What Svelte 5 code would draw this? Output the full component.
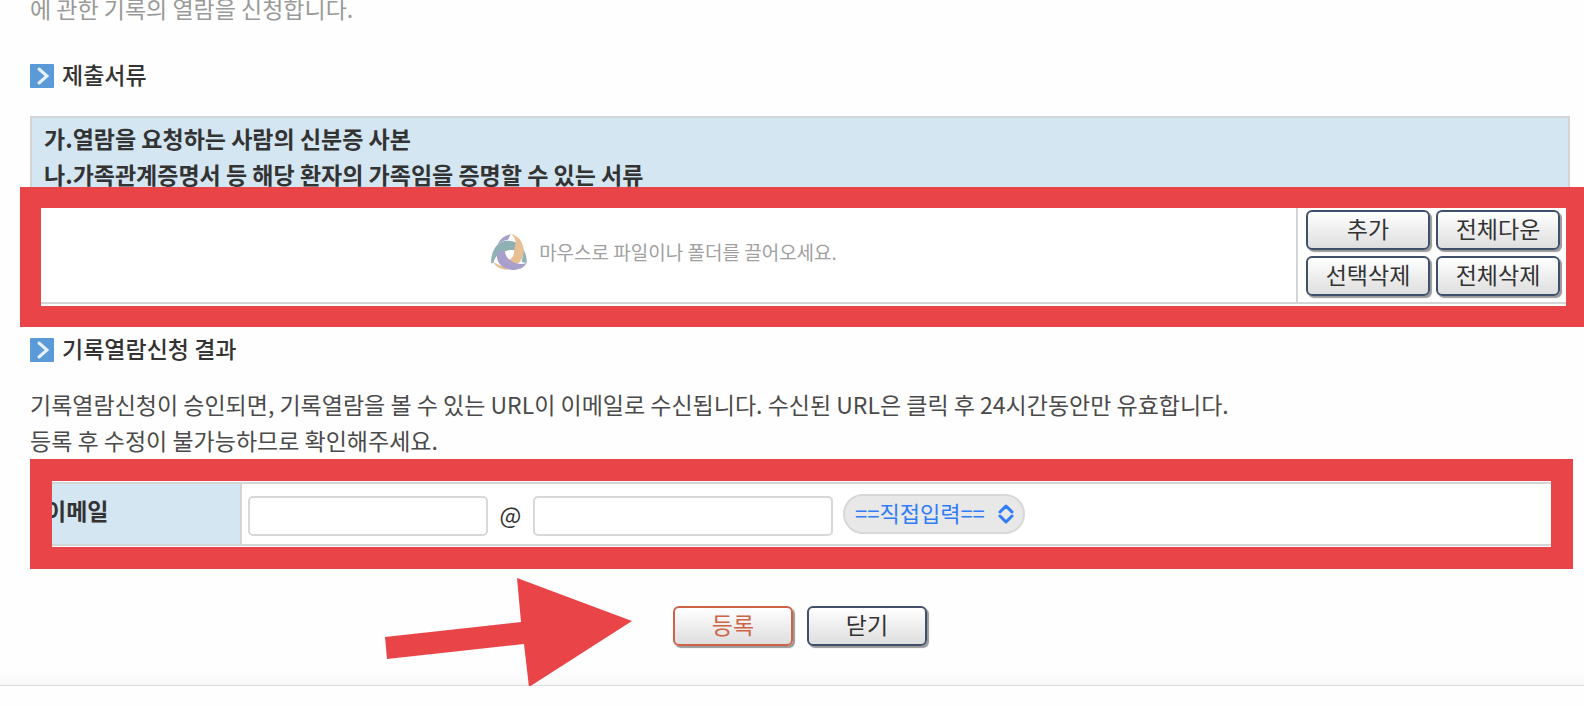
<script lang="ts">
  const documents = [
    '가.열람을 요청하는 사람의 신분증 사본',
    '나.가족관계증명서 등 해당 환자의 가족임을 증명할 수 있는 서류'
  ];

  const fileActions = ['추가', '전체다운', '선택삭제', '전체삭제'];

  let mailId = $state('');
  let mailHost = $state('');
  let mailPreset = $state('');
</script>

{#snippet heading(text: string)}
  <h2>
    <svg class="bullet" viewBox="0 0 24 24" aria-hidden="true">
      <rect width="24" height="24" rx="1" fill="#5b9ad9" />
      <path d="M9 5l8 7-8 7" fill="none" stroke="#e6f1fb" stroke-width="3" stroke-linecap="round" />
    </svg>
    {text}
  </h2>
{/snippet}

<main class="page">
  <p class="lead">에 관한 기록의 열람을 신청합니다.</p>

  {@render heading('제출서류')}

  <section class="upload">
    <ul class="documents">
      {#each documents as item}
        <li>{item}</li>
      {/each}
    </ul>
    <div class="files">
      <div class="drop-area">
        <svg class="logo" viewBox="0 0 108 108" aria-hidden="true">
          <path d="M59 1C42 3 27 15 20 31C31 22 43 18 51 17Z" fill="#a99fcb" />
          <path d="M94 42C103 53 108 70 107 87L92 84C96 70 96 55 94 42Z" fill="#8fb0b5" />
          <path d="M7 85C20 92 33 94 50 107C30 108 14 98 7 85Z" fill="#e6bf92" />
          <path d="M0 88C-1 50 20 20 48 20C58 20 68 22 76 26L75 50C60 46 46 49 38 54C22 58 10 70 7 87Z" fill="#8fb0b5" />
          <path d="M59 0C84 4 98 28 98 50C98 70 90 83 77 91L50 80C64 74 70 64 69 50L74 26C74 16 69 7 59 0Z" fill="#e6bf92" />
          <path d="M18 59C25 52 33 49 42 50C42 64 50 76 67 85C80 91 94 91 107 87C98 102 82 108 66 108C35 107 14 86 18 59Z" fill="#a99fcb" />
        </svg>
        <span>마우스로 파일이나 폴더를 끌어오세요.</span>
      </div>
      <div class="file-actions">
        {#each fileActions as action}
          <button type="button">{action}</button>
        {/each}
      </div>
    </div>
    <div class="marker marker-files"></div>
  </section>

  {@render heading('기록열람신청 결과')}

  <p class="notice">
    기록열람신청이 승인되면, 기록열람을 볼 수 있는 URL이 이메일로 수신됩니다. 수신된 URL은 클릭 후 24시간동안만 유효합니다.<br />
    등록 후 수정이 불가능하므로 확인해주세요.
  </p>

  <section class="mail">
    <table>
      <tbody>
        <tr>
          <th scope="row"><label for="mail-id">이메일</label></th>
          <td>
            <div class="mail-fields">
              <input id="mail-id" class="mail-id" type="text" bind:value={mailId} />
              <span class="at">@</span>
              <input class="mail-host" type="text" aria-label="이메일 도메인" bind:value={mailHost} />
              <span class="preset">
                <select aria-label="도메인 선택" bind:value={mailPreset}>
                  <option value="">==직접입력==</option>
                </select>
                <svg viewBox="0 0 16 20" aria-hidden="true">
                  <path d="M2 8l6-6 6 6M2 12l6 6 6-6" />
                </svg>
              </span>
            </div>
          </td>
        </tr>
      </tbody>
    </table>
    <div class="marker marker-mail"></div>
  </section>

  <div class="submit">
    <button type="submit" class="primary">등록</button>
    <button type="button">닫기</button>
    <svg class="arrow" viewBox="0 0 248 110" aria-hidden="true">
      <path d="M0 59L136 44L132 0L247 43L144 109L139 66L2 81Z" fill="#e94549" />
    </svg>
  </div>
</main>

<style>
  :global(body) {
    background: #fefefe;
  }

  .page {
    overflow: hidden;
    padding: 0 14px 0 30px;
    font-family: 'Noto Sans CJK KR', sans-serif;
    font-size: 23px;
    line-height: 36px;
    color: #4a4a4a;
  }

  .lead {
    margin: -10px 0 30px;
    color: #999;
  }

  h2 {
    display: flex;
    align-items: center;
    gap: 8px;
    margin: 0;
    font-size: 23px;
    font-weight: 500;
    color: #333;
  }

  .bullet {
    width: 24px;
    height: 24px;
    margin-top: 4px;
  }

  .upload {
    position: relative;
    margin: 24px 0 26px;
    border: 2px solid #d3d4d5;
  }

  .documents {
    margin: 0;
    padding: 2px 12px 14px;
    list-style: none;
    font-weight: 700;
    color: #333;
    background: #d4e6f1;
  }

  .files {
    display: flex;
    background: #fff;
  }

  .drop-area {
    flex: 1;
    display: flex;
    align-items: center;
    justify-content: center;
    gap: 12px;
    padding-bottom: 4px;
    font-size: 19px;
    color: #a0a0a0;
  }

  .logo {
    width: 36px;
    height: 36px;
  }

  .file-actions {
    display: grid;
    grid-template-columns: 124px 124px;
    gap: 6px;
    padding: 4px 8px 6px;
    border-left: 2px solid #d3d4d5;
  }

  button {
    height: 40px;
    padding: 0 0 4px;
    border: 2px solid #40506a;
    border-radius: 6px;
    background: linear-gradient(#fff, #dedede);
    box-shadow: 2px 2px 1px #999;
    font: inherit;
    line-height: 32px;
    color: #333;
  }

  .marker {
    position: absolute;
    pointer-events: none;
    border: 21px solid #e94549;
  }

  .marker-files {
    inset: 69px -19px -25px -12px;
  }

  .notice {
    margin: 20px 0 24px;
  }

  .mail {
    position: relative;
  }

  table {
    width: 100%;
    border-collapse: collapse;
    background: #fff;
  }

  th,
  td {
    border: 2px solid #d3d4d5;
    padding: 0;
  }

  th {
    width: 195px;
    padding: 0 0 8px 13px;
    text-align: left;
    font-weight: 700;
    color: #333;
    background: #d4e6f1;
  }

  .mail-fields {
    box-sizing: border-box;
    display: flex;
    align-items: center;
    height: 60px;
    padding: 4px 0 0 6px;
  }

  input {
    box-sizing: border-box;
    height: 40px;
    padding: 0 8px;
    border: 2px solid #d8d8d8;
    border-radius: 5px;
    background: #fff;
    font: inherit;
  }

  .mail-id {
    width: 240px;
  }

  .mail-host {
    width: 300px;
  }

  .at,
  .preset {
    margin-bottom: 4px;
  }

  .at {
    width: 45px;
    text-align: center;
    line-height: 32px;
    color: #333;
  }

  .preset {
    position: relative;
    margin-left: 10px;
  }

  select {
    display: block;
    appearance: none;
    width: 182px;
    height: 40px;
    padding: 0 10px 4px;
    border: 2px solid #d8d8d8;
    border-radius: 20px;
    background: #e8e8e8;
    font: inherit;
    font-size: 22px;
    line-height: 32px;
    color: #2f7cf6;
  }

  .preset svg {
    position: absolute;
    top: 10px;
    right: 11px;
    width: 16px;
    height: 20px;
    fill: none;
    stroke: #2f7cf6;
    stroke-width: 3;
    stroke-linecap: round;
    stroke-linejoin: round;
    pointer-events: none;
  }

  .marker-mail {
    inset: -23px -3px -23px 0;
    border-width: 22px;
  }

  .submit {
    position: relative;
    display: flex;
    justify-content: center;
    gap: 14px;
    margin: 0 -14px 0 -30px;
    padding: 60px 0 39px 16px;
    border-bottom: 1px solid #ddd;
    background: linear-gradient(transparent 90%, #f7f7f7);
  }

  .submit button {
    width: 120px;
  }

  .submit .primary {
    border-color: #cf6346;
    color: #cf6346;
  }

  .arrow {
    position: absolute;
    top: 32px;
    right: calc(50% + 159px);
    width: 248px;
    height: 110px;
  }
</style>
